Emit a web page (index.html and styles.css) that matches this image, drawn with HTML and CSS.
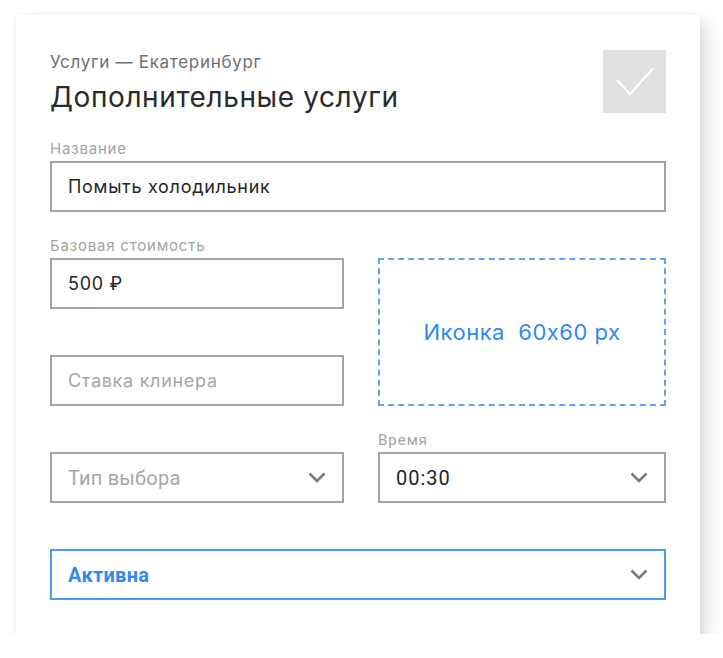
FILE: index.html
```html
<!DOCTYPE html>
<html lang="ru">
<head>
<meta charset="utf-8">
<link rel="stylesheet" href="styles.css">
</head>
<body>
<div class="card">
  <div class="header">
    <div class="titles">
      <div class="subtitle">Услуги — Екатеринбург</div>
      <h1 class="title">Дополнительные услуги</h1>
    </div>
    <button class="save" type="button" aria-label="Сохранить">
      <svg width="40" height="30" viewBox="0 0 40 30"><path d="M2 13 L15 27 L38 1.5" fill="none" stroke="#fff" stroke-width="2.2"/></svg>
    </button>
  </div>
  <div class="form">
    <div class="field span2">
      <div class="label">Название</div>
      <div class="input">Помыть холодильник</div>
    </div>
    <div class="field">
      <div class="label">Базовая стоимость</div>
      <div class="input">500 ₽</div>
    </div>
    <div class="icon-drop">Иконка&nbsp; 60x60 px</div>
    <div class="field">
      <div class="label"></div>
      <div class="input placeholder">Ставка клинера</div>
    </div>
    <div class="field">
      <div class="label"></div>
      <div class="input select placeholder narrow">Тип выбора<svg class="chev" width="18" height="11" viewBox="0 0 18 11"><path d="M1.5 1.5 L9 9 L16.5 1.5" fill="none" stroke="#7a7a7a" stroke-width="2.6"/></svg></div>
    </div>
    <div class="field">
      <div class="label narrow">Время</div>
      <div class="input select narrow digits">00:30<svg class="chev" width="18" height="11" viewBox="0 0 18 11"><path d="M1.5 1.5 L9 9 L16.5 1.5" fill="none" stroke="#7a7a7a" stroke-width="2.6"/></svg></div>
    </div>
    <div class="field span2">
      <div class="label"></div>
      <div class="input select active">Активна<svg class="chev" width="18" height="11" viewBox="0 0 18 11"><path d="M1.5 1.5 L9 9 L16.5 1.5" fill="none" stroke="#7a7a7a" stroke-width="2.6"/></svg></div>
    </div>
  </div>
</div>
</body>
</html>
```
FILE: styles.css
```css
* { box-sizing: border-box; }
html, body { margin: 0; padding: 0; background: #fff; }
body { font-family: Inter, Roboto, "Liberation Sans", sans-serif; color: #2b2b2b; }

.card {
  margin: 15px 0 0 16px;
  width: 684px;
  padding: 35px 34px 34px 34px;
  background: #fff;
  box-shadow: 0 0 6px rgba(0,0,0,0.05), 7px 9px 16px rgba(0,0,0,0.14);
}

.header {
  display: flex;
  justify-content: space-between;
  align-items: flex-start;
  height: 63px;
}
.subtitle {
  margin-top: 2px;
  font-size: 17px;
  line-height: 20px;
  letter-spacing: 0.7px;
  color: #6f6f6f;
}
.title {
  margin: 9px 0 0 0;
  font-size: 28px;
  line-height: 32px;
  letter-spacing: 0.6px;
  font-weight: 400;
  color: #2a2a2a;
}
.save {
  width: 63px;
  height: 63px;
  border: none;
  padding: 0;
  background: #e0e0e0;
  display: flex;
  align-items: center;
  justify-content: center;
}

.form {
  margin-top: 27px;
  display: grid;
  grid-template-columns: 294px 288px;
  column-gap: 34px;
  row-gap: 25px;
}
.span2 { grid-column: 1 / 3; }

.label {
  height: 18px;
  margin-bottom: 3px;
  font-size: 15px;
  line-height: 18px;
  letter-spacing: 0.8px;
  color: #a3a3a3;
}

.input {
  height: 51px;
  border: 2px solid #a4a4a4;
  padding: 0 16px;
  display: flex;
  align-items: center;
  justify-content: space-between;
  font-size: 18px;
  letter-spacing: 0.7px;
  color: #262626;
}
.placeholder { color: #a6a6a6; }
.narrow { font-family: Roboto, "Liberation Sans", sans-serif; }
.input.narrow { font-size: 20px; letter-spacing: 0.2px; }
.input.digits { letter-spacing: 1px; color: #262626; }
.label.narrow { letter-spacing: 1px; }
.active {
  border-color: #4d9bf5;
  color: #2f8af0;
  font-family: Roboto, "Liberation Sans", sans-serif;
  font-weight: 700;
  font-size: 20px;
  letter-spacing: 0.3px;
}
.chev { flex: none; }

.icon-drop {
  grid-column: 2;
  grid-row: 2 / 4;
  margin-top: 21px;
  border: 2px dashed #5ea3f6;
  display: flex;
  align-items: center;
  justify-content: center;
  font-size: 22px;
  letter-spacing: 0.5px;
  color: #3089ef;
  font-weight: 400;
}
```
